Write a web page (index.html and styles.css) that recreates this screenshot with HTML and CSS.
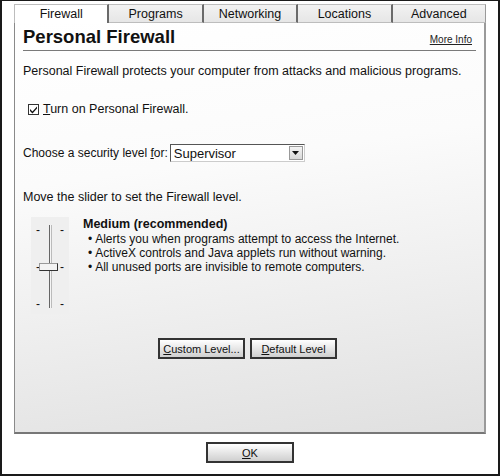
FILE: index.html
```html
<!DOCTYPE html>
<html>
<head>
<meta charset="utf-8">
<link rel="stylesheet" href="styles.css">
</head>
<body>
<div class="frame">
  <div class="tabs">
    <div class="tab active">Firewall</div>
    <div class="tab">Programs</div>
    <div class="tab">Networking</div>
    <div class="tab">Locations</div>
    <div class="tab last">Advanced</div>
  </div>
  <div class="panel">
    <div class="header">
      <h1 class="title">Personal Firewall</h1>
      <a class="more">More Info</a>
    </div>
    <p class="intro">Personal Firewall protects your computer from attacks and malicious programs.</p>
    <label class="check-row">
      <span class="checkbox"><svg width="9" height="9" viewBox="0 0 9 9"><path d="M1 4 L3.5 6.5 L8 1.5 L8 3.5 L3.5 8.5 L1 6 Z" fill="#111"/></svg></span>
      <span><u>T</u>urn on Personal Firewall.</span>
    </label>
    <div class="level-row">
      <span>Choose a security level <u>f</u>or:</span>
      <div class="select">
        <span class="select-text">Supervisor</span>
        <span class="select-btn"><svg width="7" height="4" viewBox="0 0 7 4"><path d="M0 0 H7 L3.5 4 Z" fill="#111"/></svg></span>
      </div>
    </div>
    <p class="slider-label">Move the slider to set the Firewall level.</p>
    <div class="slider-area">
      <div class="slider">
        <div class="track"></div>
        <div class="tick-row"><span>-</span><span>-</span></div>
        <div class="tick-row mid"><span>-</span><div class="thumb"></div><span>-</span></div>
        <div class="tick-row"><span>-</span><span>-</span></div>
      </div>
      <div class="level-desc">
        <div class="level-name">Medium (recommended)</div>
        <ul class="bullets">
          <li>Alerts you when programs attempt to access the Internet.</li>
          <li>ActiveX controls and Java applets run without warning.</li>
          <li>All unused ports are invisible to remote computers.</li>
        </ul>
      </div>
    </div>
    <div class="buttons">
      <button class="btn wide"><u>C</u>ustom Level...</button>
      <button class="btn wide"><u>D</u>efault Level</button>
    </div>
  </div>
  <div class="footer">
    <button class="btn ok"><u>O</u>K</button>
  </div>
</div>
</body>
</html>
```
FILE: styles.css
```css
* { box-sizing: border-box; }
html, body { margin: 0; padding: 0; background: #fff; }
body { font-family: "Liberation Sans", Arial, sans-serif; color: #111; }
.frame {
  width: 500px; height: 476px;
  border: 2px solid #1a1a1a;
  border-top-width: 1px;
  padding: 3px 12px 0 12px;
  background: #fff;
  display: flex; flex-direction: column;
}
.tabs { display: flex; height: 19px; }
.tab {
  flex: 1;
  font-size: 12.5px;
  text-align: center;
  line-height: 18px;
  background: linear-gradient(#f2f2f2, #e6e6e6);
  border-top: 1px solid #bdbdbd;
  border-right: 2px solid #6a6a6a;
  border-bottom: 1px solid #bdbdbd;
}
.tab.active { background: #fff; border-bottom: none; border-left: 1px solid #bdbdbd; }
.tab.last { border-right: 1px solid #9a9a9a; }
.panel {
  height: 411px;
  border-left: 1px solid #8a8a8a;
  border-right: 2px solid #9a9a9a;
  border-bottom: 2px solid #777;
  background: linear-gradient(172deg, #ffffff 0%, #fbfbfb 35%, #f0f0f0 62%, #e0e0e0 100%);
  padding: 0 8px 0 8px;
}
.header {
  display: flex; justify-content: space-between; align-items: flex-end;
  border-bottom: 1px solid #7a7a7a;
  height: 28px;
  padding-bottom: 2px;
}
.title { margin: 0; font-size: 18.5px; font-weight: bold; line-height: 22px; }
.more { font-size: 10px; text-decoration: underline; color: #222; margin-right: 4px; margin-bottom: 3px; }
.intro { margin: 12px 0 0 0; font-size: 12.5px; line-height: 16px; }
.check-row { display: flex; align-items: center; gap: 4px; margin: 22px 0 0 5px; font-size: 12.5px; line-height: 16px; }
.checkbox {
  width: 11px; height: 11px; border: 1px solid #333; background: #fff;
  display: flex; align-items: center; justify-content: center;
}
.level-row { display: flex; align-items: center; gap: 2px; margin-top: 27px; font-size: 12px; }
.select {
  width: 135px; height: 18px; display: flex; align-items: center; justify-content: space-between;
  border: 1px solid #555; border-right-color: #ccc; border-bottom-color: #ccc;
  background: #fff; padding: 0 1px 0 3px;
  font-size: 13px;
}
.select-btn {
  width: 14px; height: 14px; display: flex; align-items: center; justify-content: center;
  background: linear-gradient(#f4f4f4, #d8d8d8); border: 1px solid #999;
}
.slider-label { margin: 27px 0 0 0; font-size: 12.5px; line-height: 16px; }
.slider-area { display: flex; margin-top: 12px; margin-left: 8px; gap: 14px; }
.slider {
  position: relative;
  width: 38px; height: 97px;
  background: #efefef;
  display: flex; flex-direction: column; justify-content: space-between;
  padding: 6px 5px 3px 5px;
}
.track { position: absolute; left: 18px; top: 8px; bottom: 6px; width: 3px; border-left: 1px solid #666; border-right: 1px solid #bbb; background: #f5f5f5; }
.tick-row { position: relative; display: flex; justify-content: space-between; font-size: 12px; line-height: 14px; }
.thumb {
  position: absolute; left: 3px; top: 3px; width: 19px; height: 8px;
  background: #f3f3f3; border: 1px solid #999; border-bottom-color: #333; border-right-color: #333;
}
.level-desc { font-size: 12px; line-height: 14px; padding-top: 0; }
.level-name { font-weight: bold; font-size: 12.5px; }
.bullets { list-style: none; margin: 1px 0 0 0; padding: 0 0 0 5px; }
.bullets li::before { content: "\2022"; margin-right: 3px; }
.buttons { display: flex; justify-content: center; gap: 5px; margin-top: 24px; margin-right: 4px; }
.btn {
  font-family: "Liberation Sans", Arial, sans-serif; font-size: 11px; color: #111;
  height: 21px; padding: 0;
  border: 2px solid #333;
  background: linear-gradient(#ffffff, #e2e2e2 60%, #cfcfcf);
}
.btn.wide { width: 87px; }
.footer { display: flex; justify-content: center; padding-top: 8px; }
.btn.ok { width: 88px; }
```
